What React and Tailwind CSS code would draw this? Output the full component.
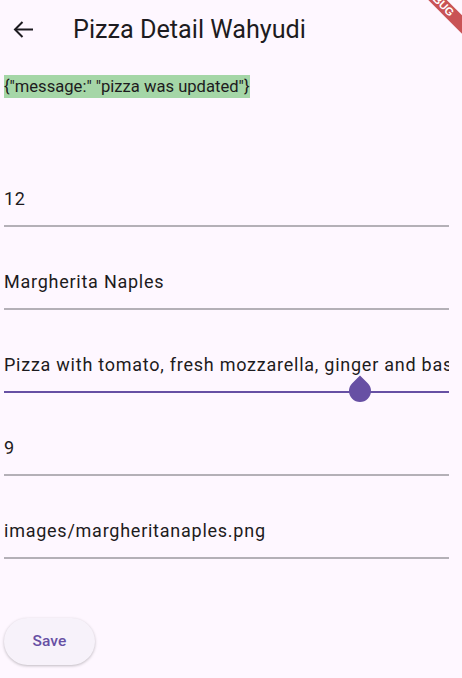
import React from "react";

function Field({ text, active, children }) {
  return (
    <div className="relative h-[83px] flex flex-col justify-end">
      <div className="h-[24px] leading-[24px] text-[18px] tracking-[0.75px] text-[#1d1b20] whitespace-nowrap overflow-hidden mb-[14px]">
        {text}
      </div>
      <div className={active ? "h-[2px] bg-[#6750a4]" : "h-[2px] bg-[#b4b0b7]"} />
      {children}
    </div>
  );
}

export default function App() {
  return (
    <div
      className="relative w-full h-[678px] overflow-hidden bg-[#fef7ff]"
      style={{ fontFamily: "Roboto, 'Noto Sans', sans-serif" }}
    >
      {/* App bar */}
      <div className="h-[59px] flex items-center">
        <div className="w-[73px] pl-[13px] flex items-center">
          <svg width="20" height="17" viewBox="0 0 20 17" fill="none" stroke="#1d1b20" strokeWidth="2">
            <path d="M20 8.5H2" />
            <path d="M9.5 1L2 8.5L9.5 16" />
          </svg>
        </div>
        <div className="text-[25.2px] leading-[30px] text-[#1d1b20]">Pizza Detail Wahyudi</div>
      </div>

      {/* Body */}
      <div className="px-[4px] pt-[16px]">
        <div>
          <span className="inline-block bg-[#a5d6a7] text-[16.6px] leading-[23px] text-[#1d1b20]">
            {'{"message:" "pizza was updated"}'}
          </span>
        </div>
        <div className="w-[445px] mt-[45px]">
          <Field text="12" />
          <Field text="Margherita Naples" />
          <Field text="Pizza with tomato, fresh mozzarella, ginger and basil" active>
            <div className="absolute left-[345px] top-[70px] w-[22px] h-[22px] bg-[#6750a4] rounded-full rounded-tl-none rotate-45" />
          </Field>
          <Field text="9" />
          <Field text="images/margheritanaples.png" />
        </div>
        <div className="mt-[59px]">
          <button className="w-[91px] h-[47px] rounded-full bg-[#f7f2fa] shadow-[0_1px_3px_rgba(0,0,0,0.25)] text-[15.5px] font-medium tracking-[0.1px] text-[#6750a4]">
            Save
          </button>
        </div>
      </div>

      {/* Debug banner */}
      <div className="absolute left-[378px] top-[-6px] w-[120px] h-[13px] rotate-45 bg-[rgba(183,28,28,0.75)] flex items-center justify-center">
        <span className="text-[11px] leading-[13px] font-black text-white" style={{ fontFamily: "'Liberation Sans', sans-serif" }}>
          DEBUG
        </span>
      </div>
    </div>
  );
}
